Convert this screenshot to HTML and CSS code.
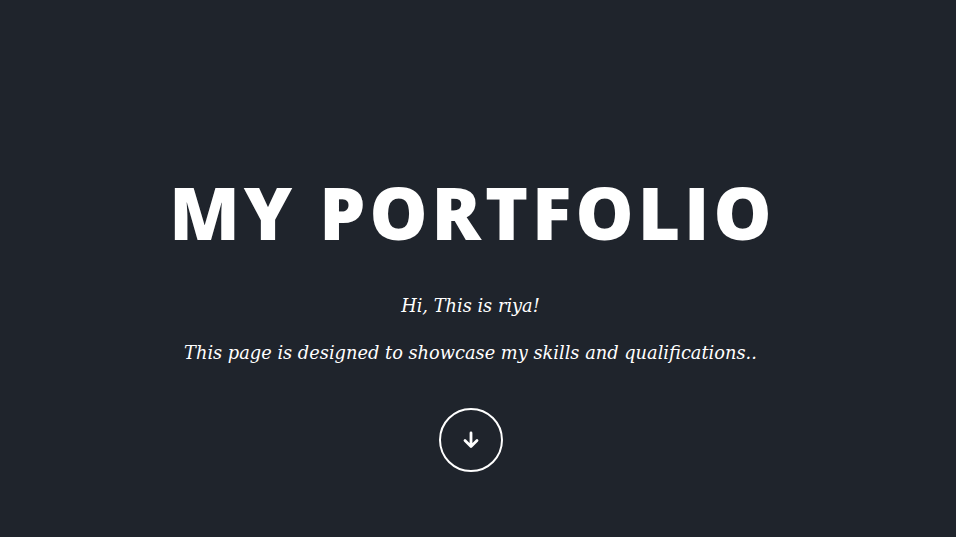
FILE: index.html
```html
<!DOCTYPE html>
<html>
<head>
<meta charset="utf-8">
<link rel="stylesheet" href="styles.css">
</head>
<body>
<section class="hero">
  <h1 class="title">MY PORTFOLIO</h1>
  <p class="intro">Hi, This is riya!</p>
  <p class="intro intro-second">This page is designed to showcase my skills and qualifications..</p>
  <a class="down" href="#about" aria-label="Scroll down">
    <svg width="20" height="20" viewBox="0 0 20 20"><path d="M10 3 V16.5 M4 10.5 L10 16.5 L16 10.5" fill="none" stroke="#fff" stroke-width="2.8" stroke-linecap="round" stroke-linejoin="round"/></svg>
  </a>
</section>
</body>
</html>
```
FILE: styles.css
```css
html, body {
  margin: 0;
  padding: 0;
  height: 100%;
}
body {
  background: #1f242c;
  color: #fff;
}
.hero {
  height: 537px;
  display: flex;
  flex-direction: column;
  align-items: center;
  padding-top: 170px;
  padding-right: 15px;
  box-sizing: border-box;
}
.title {
  margin: 0;
  font-family: "Open Sans", sans-serif;
  font-weight: 800;
  font-size: 73px;
  line-height: 84px;
  letter-spacing: 4px;
  margin-left: 4px;
}
.intro {
  margin: 38px 0 0;
  font-family: "DejaVu Serif", serif;
  font-style: italic;
  font-size: 17.8px;
  line-height: 28px;
}
.intro-second {
  margin-top: 19px;
}
.down {
  margin-top: 41px;
  width: 60px;
  height: 60px;
  border: 2px solid #fff;
  border-radius: 50%;
  display: flex;
  align-items: center;
  justify-content: center;
}
```
